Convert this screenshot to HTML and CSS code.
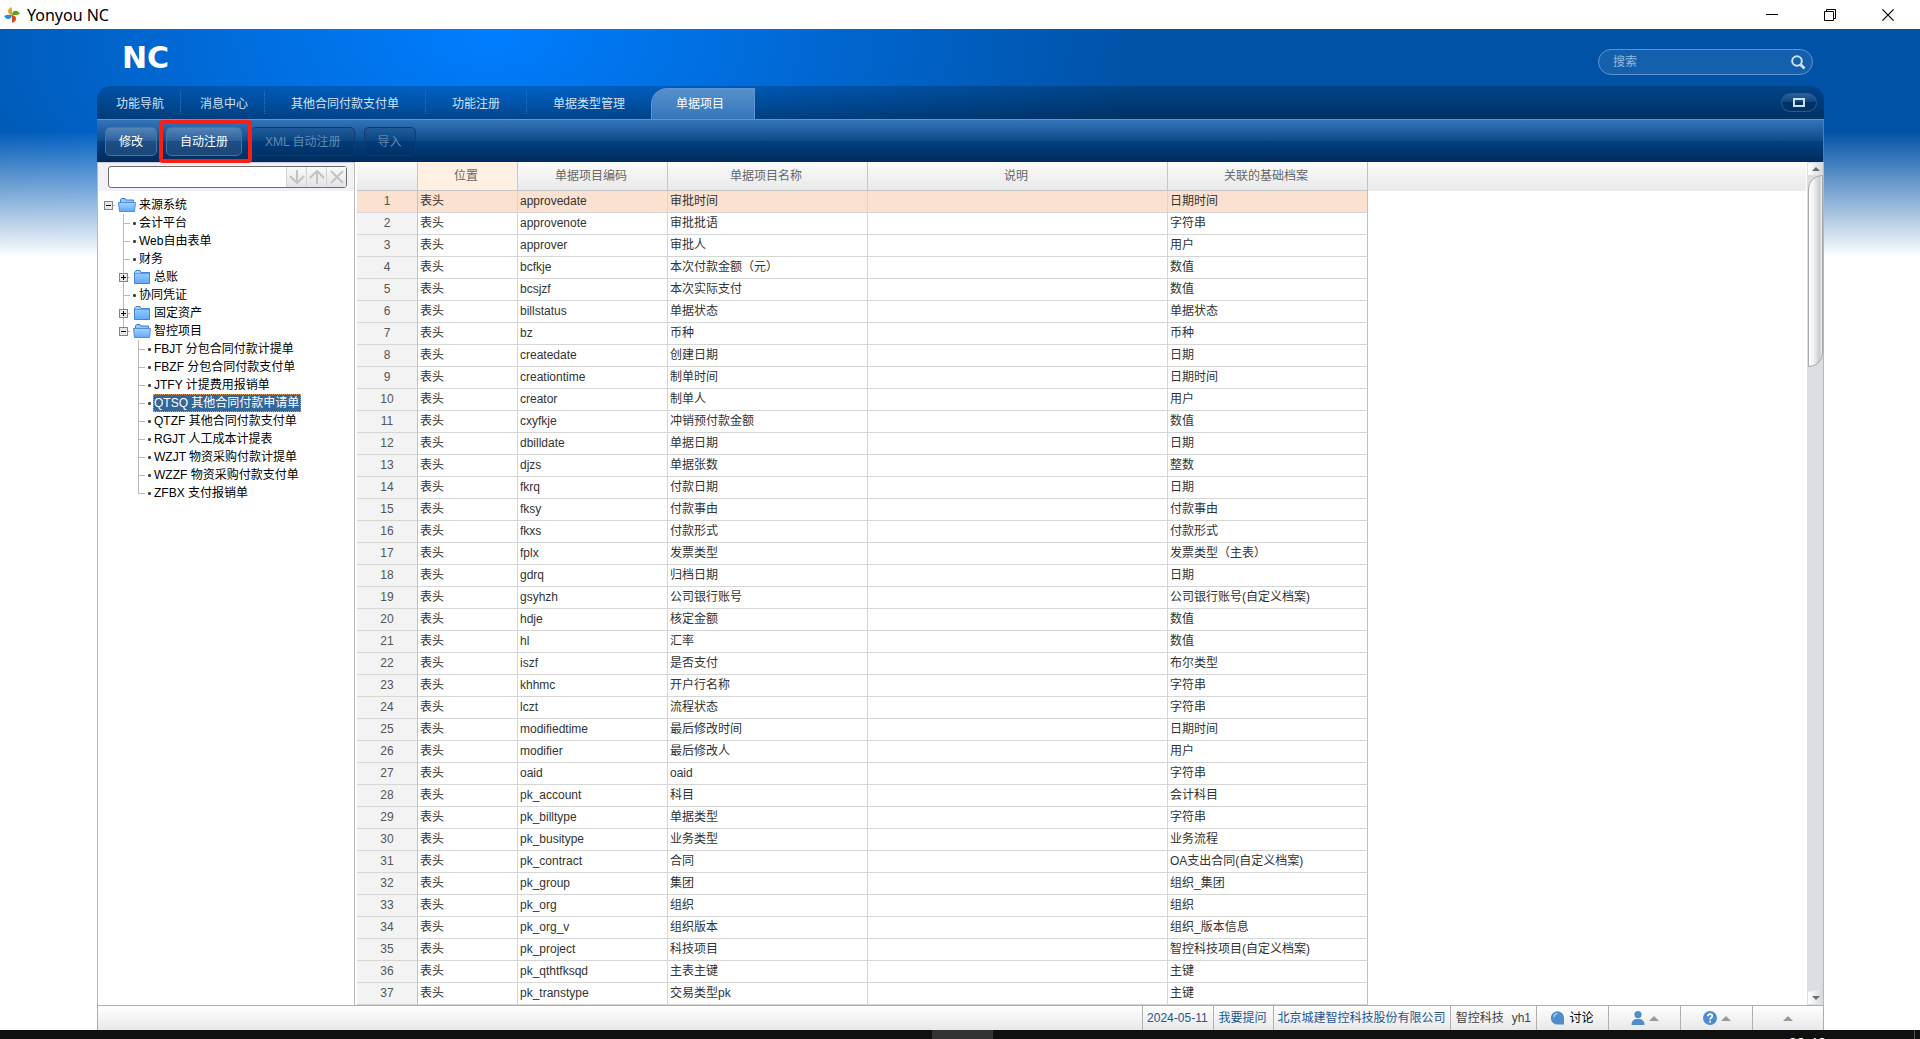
FILE: index.html
```html
<!DOCTYPE html>
<html lang="zh-CN">
<head>
<meta charset="utf-8">
<title>Yonyou NC</title>
<link rel="stylesheet" href="styles.css">
</head>
<body>
<header class="titlebar">
  <svg class="app-icon" width="16" height="16" viewBox="0 0 16 16" aria-hidden="true">
    <path d="M7.800 8C3 7 2.500 2 7.500 0C8 1.500 8.300 5 7.800 8Z" fill="#f0a020"/>
    <path d="M8 7.800C8 3 13.500 2 16 6.800C14 8 11 8.300 8 7.800Z" fill="#5fa51a"/>
    <path d="M8 8C13 8.500 13.500 14 8.500 16C7.800 14 7.600 11 8 8Z" fill="#d9481c"/>
    <path d="M7.800 8C7.500 13 2.500 13.500 0 9C2 7.800 5 7.400 7.800 8Z" fill="#1f8fe8"/>
  </svg>
  <h1 class="window-title">Yonyou NC</h1>
  <div class="window-controls">
    <button class="window-button" aria-label="最小化"><svg width="12" height="12" viewBox="0 0 12 12"><path d="M0 5.500H12" stroke="#000"/></svg></button>
    <button class="window-button" aria-label="还原"><svg width="12" height="12" viewBox="0 0 12 12"><path d="M.5 2.500H9.500V11.500H.5ZM2.500 2.500V.5H11.500V9.500H9.500" fill="none" stroke="#000"/></svg></button>
    <button class="window-button" aria-label="关闭"><svg width="12" height="12" viewBox="0 0 12 12"><path d="M.4 .4L11.600 11.600M11.600 .4L.4 11.600" stroke="#000" stroke-width="1.200"/></svg></button>
  </div>
</header>

<div class="desktop">
  <div class="app">
    <div class="banner">
      <div class="logo">NC</div>
      <form class="global-search">
        <input class="global-search-input" type="text" placeholder="搜索" aria-label="搜索">
        <button class="global-search-button" type="button" aria-label="搜索"><svg width="15" height="15" viewBox="0 0 15 15"><circle cx="6" cy="6" r="4.800" fill="none" stroke="#cfe0f2" stroke-width="2"/><path d="M9.500 9.500L13.500 13.500" stroke="#cfe0f2" stroke-width="2.800"/></svg></button>
      </form>
    </div>

    <nav class="tabs">
      <button class="tab tab-fixed">功能导航</button>
      <button class="tab tab-fixed">消息中心</button>
      <button class="tab">其他合同付款支付单</button>
      <button class="tab tab-wide">功能注册</button>
      <button class="tab tab-last">单据类型管理</button>
      <button class="tab tab-active">单据项目</button>
      <button class="maximize" aria-label="最大化"><span class="maximize-mark"></span></button>
    </nav>

    <div class="toolbar">
      <button class="tool">修改</button>
      <button class="tool tool-marked">自动注册</button>
      <button class="tool" disabled>XML 自动注册</button>
      <button class="tool" disabled>导入</button>
    </div>

    <main class="workspace">
      <aside class="sidebar">
        <div class="finder">
          <div class="finder-box">
            <input class="finder-input" type="text" aria-label="查找">
            <button class="finder-button" aria-label="下一个"><svg width="16" height="16" viewBox="0 0 16 16"><path d="M8 1V14M1 7L8 14L15 7" fill="none" stroke="#c2c2c2" stroke-width="2"/></svg></button>
            <button class="finder-button" aria-label="上一个"><svg width="16" height="16" viewBox="0 0 16 16"><path d="M8 15V2M1 9L8 2L15 9" fill="none" stroke="#c2c2c2" stroke-width="2"/></svg></button>
            <button class="finder-button" aria-label="清除"><svg width="16" height="16" viewBox="0 0 16 16"><path d="M2 2L14 14M14 2L2 14" fill="none" stroke="#c2c2c2" stroke-width="2"/></svg></button>
          </div>
        </div>
        <svg width="0" height="0" class="symbols" aria-hidden="true">
          <defs>
            <linearGradient id="blue" x1="0" y1="0" x2="0" y2="1"><stop offset="0" stop-color="#a9d2ff"/><stop offset="1" stop-color="#5fa9fb"/></linearGradient>
            <symbol id="open" viewBox="0 0 18 14"><path d="M2.500 12V1.500L3.500.5H7L8 2H15.500V12" fill="#8fc4ff" stroke="#3c80c8"/><path d="M.5 4.500H17.500L16.500 13.500H1.500Z" fill="url(#blue)" stroke="#4a90dc"/></symbol>
            <symbol id="closed" viewBox="0 0 18 14"><path d="M1.500 2.500L3 .5H7L8 2.500H16.500V13.500H1.500Z" fill="url(#blue)" stroke="#3c86d2"/><path d="M2 3.500H16" stroke="#5d9fe6"/></symbol>
          </defs>
        </svg>
        <ul class="tree">
          <li>
            <div class="node"><span class="join join-root"><button class="toggle" aria-label="收起"></button></span><svg class="folder"><use href="#open"/></svg><span class="label">来源系统</span></div>
            <ul class="branch">
              <li><div class="node"><span class="join"></span><i class="dot"></i><span class="label">会计平台</span></div></li>
              <li><div class="node"><span class="join"></span><i class="dot"></i><span class="label">Web自由表单</span></div></li>
              <li><div class="node"><span class="join"></span><i class="dot"></i><span class="label">财务</span></div></li>
              <li><div class="node"><span class="join"><button class="toggle toggle-plus" aria-label="展开"></button></span><svg class="folder"><use href="#closed"/></svg><span class="label">总账</span></div></li>
              <li><div class="node"><span class="join"></span><i class="dot"></i><span class="label">协同凭证</span></div></li>
              <li><div class="node"><span class="join"><button class="toggle toggle-plus" aria-label="展开"></button></span><svg class="folder"><use href="#closed"/></svg><span class="label">固定资产</span></div></li>
              <li>
                <div class="node"><span class="join join-end"><button class="toggle" aria-label="收起"></button></span><svg class="folder"><use href="#open"/></svg><span class="label">智控项目</span></div>
                <ul class="branch">
                  <li><div class="node"><span class="join"></span><i class="dot"></i><span class="label">FBJT 分包合同付款计提单</span></div></li>
                  <li><div class="node"><span class="join"></span><i class="dot"></i><span class="label">FBZF 分包合同付款支付单</span></div></li>
                  <li><div class="node"><span class="join"></span><i class="dot"></i><span class="label">JTFY 计提费用报销单</span></div></li>
                  <li><div class="node"><span class="join"></span><i class="dot"></i><span class="label label-selected">QTSQ 其他合同付款申请单</span></div></li>
                  <li><div class="node"><span class="join"></span><i class="dot"></i><span class="label">QTZF 其他合同付款支付单</span></div></li>
                  <li><div class="node"><span class="join"></span><i class="dot"></i><span class="label">RGJT 人工成本计提表</span></div></li>
                  <li><div class="node"><span class="join"></span><i class="dot"></i><span class="label">WZJT 物资采购付款计提单</span></div></li>
                  <li><div class="node"><span class="join"></span><i class="dot"></i><span class="label">WZZF 物资采购付款支付单</span></div></li>
                  <li><div class="node"><span class="join join-end"></span><i class="dot"></i><span class="label">ZFBX 支付报销单</span></div></li>
                </ul>
              </li>
            </ul>
          </li>
        </ul>
      </aside>

      <section class="grid-pane">
        <table class="grid">
          <colgroup><col class="col-index"><col class="col-place"><col class="col-code"><col class="col-name"><col class="col-note"><col class="col-doc"><col></colgroup>
          <thead>
            <tr><th></th><th class="sorted">位置</th><th>单据项目编码</th><th>单据项目名称</th><th>说明</th><th>关联的基础档案</th><th></th></tr>
          </thead>
          <tbody>
            <tr class="current"><th>1</th><td>表头</td><td>approvedate</td><td>审批时间</td><td></td><td>日期时间</td><td></td></tr>
            <tr><th>2</th><td>表头</td><td>approvenote</td><td>审批批语</td><td></td><td>字符串</td><td></td></tr>
            <tr><th>3</th><td>表头</td><td>approver</td><td>审批人</td><td></td><td>用户</td><td></td></tr>
            <tr><th>4</th><td>表头</td><td>bcfkje</td><td>本次付款金额（元）</td><td></td><td>数值</td><td></td></tr>
            <tr><th>5</th><td>表头</td><td>bcsjzf</td><td>本次实际支付</td><td></td><td>数值</td><td></td></tr>
            <tr><th>6</th><td>表头</td><td>billstatus</td><td>单据状态</td><td></td><td>单据状态</td><td></td></tr>
            <tr><th>7</th><td>表头</td><td>bz</td><td>币种</td><td></td><td>币种</td><td></td></tr>
            <tr><th>8</th><td>表头</td><td>createdate</td><td>创建日期</td><td></td><td>日期</td><td></td></tr>
            <tr><th>9</th><td>表头</td><td>creationtime</td><td>制单时间</td><td></td><td>日期时间</td><td></td></tr>
            <tr><th>10</th><td>表头</td><td>creator</td><td>制单人</td><td></td><td>用户</td><td></td></tr>
            <tr><th>11</th><td>表头</td><td>cxyfkje</td><td>冲销预付款金额</td><td></td><td>数值</td><td></td></tr>
            <tr><th>12</th><td>表头</td><td>dbilldate</td><td>单据日期</td><td></td><td>日期</td><td></td></tr>
            <tr><th>13</th><td>表头</td><td>djzs</td><td>单据张数</td><td></td><td>整数</td><td></td></tr>
            <tr><th>14</th><td>表头</td><td>fkrq</td><td>付款日期</td><td></td><td>日期</td><td></td></tr>
            <tr><th>15</th><td>表头</td><td>fksy</td><td>付款事由</td><td></td><td>付款事由</td><td></td></tr>
            <tr><th>16</th><td>表头</td><td>fkxs</td><td>付款形式</td><td></td><td>付款形式</td><td></td></tr>
            <tr><th>17</th><td>表头</td><td>fplx</td><td>发票类型</td><td></td><td>发票类型（主表）</td><td></td></tr>
            <tr><th>18</th><td>表头</td><td>gdrq</td><td>归档日期</td><td></td><td>日期</td><td></td></tr>
            <tr><th>19</th><td>表头</td><td>gsyhzh</td><td>公司银行账号</td><td></td><td>公司银行账号(自定义档案)</td><td></td></tr>
            <tr><th>20</th><td>表头</td><td>hdje</td><td>核定金额</td><td></td><td>数值</td><td></td></tr>
            <tr><th>21</th><td>表头</td><td>hl</td><td>汇率</td><td></td><td>数值</td><td></td></tr>
            <tr><th>22</th><td>表头</td><td>iszf</td><td>是否支付</td><td></td><td>布尔类型</td><td></td></tr>
            <tr><th>23</th><td>表头</td><td>khhmc</td><td>开户行名称</td><td></td><td>字符串</td><td></td></tr>
            <tr><th>24</th><td>表头</td><td>lczt</td><td>流程状态</td><td></td><td>字符串</td><td></td></tr>
            <tr><th>25</th><td>表头</td><td>modifiedtime</td><td>最后修改时间</td><td></td><td>日期时间</td><td></td></tr>
            <tr><th>26</th><td>表头</td><td>modifier</td><td>最后修改人</td><td></td><td>用户</td><td></td></tr>
            <tr><th>27</th><td>表头</td><td>oaid</td><td>oaid</td><td></td><td>字符串</td><td></td></tr>
            <tr><th>28</th><td>表头</td><td>pk_account</td><td>科目</td><td></td><td>会计科目</td><td></td></tr>
            <tr><th>29</th><td>表头</td><td>pk_billtype</td><td>单据类型</td><td></td><td>字符串</td><td></td></tr>
            <tr><th>30</th><td>表头</td><td>pk_busitype</td><td>业务类型</td><td></td><td>业务流程</td><td></td></tr>
            <tr><th>31</th><td>表头</td><td>pk_contract</td><td>合同</td><td></td><td>OA支出合同(自定义档案)</td><td></td></tr>
            <tr><th>32</th><td>表头</td><td>pk_group</td><td>集团</td><td></td><td>组织_集团</td><td></td></tr>
            <tr><th>33</th><td>表头</td><td>pk_org</td><td>组织</td><td></td><td>组织</td><td></td></tr>
            <tr><th>34</th><td>表头</td><td>pk_org_v</td><td>组织版本</td><td></td><td>组织_版本信息</td><td></td></tr>
            <tr><th>35</th><td>表头</td><td>pk_project</td><td>科技项目</td><td></td><td>智控科技项目(自定义档案)</td><td></td></tr>
            <tr><th>36</th><td>表头</td><td>pk_qthtfksqd</td><td>主表主键</td><td></td><td>主键</td><td></td></tr>
            <tr><th>37</th><td>表头</td><td>pk_transtype</td><td>交易类型pk</td><td></td><td>主键</td><td></td></tr>
          </tbody>
        </table>
        <div class="scrollbar" aria-hidden="true">
          <div class="scroll-arrow"><i class="arrow arrow-up"></i></div>
          <div class="scroll-thumb"></div>
          <div class="scroll-track"></div>
          <div class="scroll-arrow scroll-arrow-down"><i class="arrow arrow-down"></i></div>
        </div>
      </section>
    </main>

    <footer class="status">
      <a class="status-item status-link" href="#">2024-05-11</a>
      <a class="status-item status-link" href="#">我要提问</a>
      <a class="status-item status-link" href="#">北京城建智控科技股份有限公司</a>
      <span class="status-item status-user"><span>智控科技</span><span>yh1</span></span>
      <button class="status-item status-button status-talk"><svg width="14" height="14" viewBox="0 0 14 14"><path d="M6.500 .3A6.400 6.400 0 0 0 6.500 13.600H13V7A6.500 6.500 0 0 0 6.500 .3Z" fill="#4e8dcb"/><path d="M3 6.500A4 4 0 0 1 6.500 2.600" fill="none" stroke="#b8d6f2" stroke-width="1.200"/></svg><span>讨论</span></button>
      <button class="status-item status-button" aria-label="用户"><svg width="14" height="14" viewBox="0 0 14 14"><circle cx="7" cy="3.600" r="3.600" fill="#4e8dcb"/><path d="M.5 14C.5 9 3.500 8 7 8S13.500 9 13.500 14Z" fill="#4e8dcb"/></svg><i class="caret"></i></button>
      <button class="status-item status-button" aria-label="帮助"><svg width="14" height="14" viewBox="0 0 14 14"><circle cx="7" cy="7" r="7" fill="#4e8dcb"/><path d="M4.800 5.300C4.800 2.300 9.300 2.500 9.300 5.200C9.300 6.800 7.100 6.800 7.100 8.600M7.100 9.800V11.600" fill="none" stroke="#fff" stroke-width="1.700"/></svg><i class="caret"></i></button>
      <button class="status-item status-button status-more" aria-label="更多"><i class="caret"></i></button>
    </footer>
  </div>
</div>

<div class="taskbar">
  <div class="taskbar-window"></div>
  <time class="clock">20:42</time>
  <div class="show-desktop"></div>
</div>
</body>
</html>
```
FILE: styles.css
```css
* { box-sizing: border-box; }

body {
  margin: 0;
  min-height: 100vh;
  display: flex;
  flex-direction: column;
  background: #fff;
  color: #333;
  font: 12px/18px "Liberation Sans", "Noto Sans CJK SC", sans-serif;
}

button, input {
  margin: 0;
  padding: 0;
  border: 0;
  background: none;
  color: inherit;
  font: inherit;
}

ul { margin: 0; padding: 0; list-style: none; }
svg { display: block; flex: none; }

/* window title */
.titlebar {
  display: flex;
  align-items: center;
  height: 29px;
  padding-left: 4px;
}
.window-title {
  margin: 0 0 0 7px;
  color: #000;
  font: 16px/24px "Noto Sans", sans-serif;
}
.window-controls { display: flex; margin-left: auto; padding-right: 3px; }
.window-button {
  display: flex;
  justify-content: center;
  align-items: center;
  width: 58px;
  height: 29px;
}

/* blue backdrop that fades out to white */
.desktop {
  flex: 1;
  display: flex;
  background:
    linear-gradient(rgba(255, 255, 255, 0) 102px, #fff 228px),
    radial-gradient(650px 320px at 490px 10px, #007eff, #005dbd 75%, #0052a6);
}
.app {
  flex: 1;
  min-width: 0;
  display: flex;
  flex-direction: column;
  margin: 0 96px 0 97px;
}

.banner {
  display: flex;
  justify-content: space-between;
  height: 57px;
  padding: 0 11px 0 25px;
}
.logo {
  color: #fff;
  font: bold 30px/57px "DejaVu Sans", sans-serif;
}
.global-search {
  display: flex;
  align-items: center;
  width: 215px;
  height: 26px;
  margin-top: 20px;
  padding: 0 6px 0 14px;
  border: 1px solid #5f93cc;
  border-radius: 13px;
  background: #1560ad;
}
.global-search-input { flex: 1; min-width: 0; outline: 0; color: #fff; }
.global-search-input::placeholder { color: #93b9e2; opacity: 1; }

/* page tabs */
.tabs {
  display: flex;
  align-items: center;
  height: 33px;
  border-radius: 14px 14px 0 0;
  background: linear-gradient(rgba(0, 0, 0, .18), rgba(0, 0, 0, .28) 50%, rgba(0, 0, 0, .4));
}
.tab {
  height: 23px;
  padding: 2px 26px 0;
  border-right: 1px dotted #3f74ab;
  color: #d2e2f3;
}
.tab-fixed { padding: 2px 16px 0 19px; }
.tab-last { border-right: 0; }
.tab-active {
  align-self: flex-end;
  height: 31px;
  padding: 0 30px 0 24px;
  border: 1px solid #5b96d2;
  border-bottom: 0;
  border-radius: 16px 0 0 0;
  background: linear-gradient(#5590cd, #3576ba);
  color: #fff;
}
.maximize {
  display: flex;
  justify-content: center;
  align-items: center;
  width: 36px;
  height: 19px;
  margin: 0 7px 0 auto;
  border: 1px solid #2a5c94;
  border-radius: 10px;
  background: linear-gradient(#2a609e, #0c4280 50%, #003266 50%);
}
.maximize-mark { width: 12px; height: 9px; border: 2px solid #cfe0f2; }

/* action buttons */
.toolbar {
  display: flex;
  align-items: center;
  gap: 9px;
  height: 43px;
  padding: 1px 8px 0;
  border-top: 1px solid #5c97d2;
  border-right: 1px solid #4a80ba;
  background: linear-gradient(#3375ba, #0e4a89 50%, #004080 50%, #002c5f);
}
.tool {
  height: 29px;
  padding: 0 13px;
  border: 1px solid #49749f;
  border-radius: 5px;
  background: linear-gradient(#5484b7, #2b5f9b 50%, #1d4f86 50%, #1b4678);
  color: #fff;
}
.tool:disabled {
  border-color: #0d3b70;
  background: rgba(0, 40, 90, .15);
  color: #6489b1;
}
.tool-marked { position: relative; }
.tool-marked::after {
  content: "";
  position: absolute;
  inset: -8px -11px -8px -8px;
  border: 4px solid #ff1c12;
  border-radius: 4px;
}

.workspace {
  flex: 1;
  display: flex;
  border: solid #b9b9bd;
  border-width: 0 1px;
  background: #fff;
}

/* navigation tree */
.sidebar {
  width: 257px;
  border-right: 1px solid #bcbcbc;
}
.finder {
  height: 29px;
  padding: 3px 7px 0 10px;
  border-top: 1px solid #c9ccd6;
  background: #f1f1f7;
}
.finder-box {
  display: flex;
  height: 22px;
  border: 1px solid #6c6c6c;
  border-radius: 3px;
  background: #fff;
}
.finder-input { flex: 1; min-width: 0; padding: 0 3px; outline: 0; }
.finder-button {
  display: flex;
  justify-content: center;
  align-items: center;
  width: 20px;
  border-left: 1px solid #d4d4d4;
  background: linear-gradient(#fafafa, #e3e3e5);
}
.symbols { position: absolute; }
.tree { padding: 5px 0 0 6px; color: #000; }
.branch { padding-left: 15px; }
.node { display: flex; align-items: center; height: 18px; white-space: nowrap; }
.join {
  display: flex;
  align-items: center;
  width: 11px;
  height: 18px;
  margin-right: 3px;
  background:
    linear-gradient(#b9b9b9, #b9b9b9) 4px 0 / 1px 100% no-repeat,
    linear-gradient(#b9b9b9, #b9b9b9) 4px 9px / 7px 1px no-repeat;
}
.join-end { background-size: 1px 9px, 7px 1px; }
.join-root { background-size: 0 0, 7px 1px; }
.toggle {
  width: 9px;
  height: 9px;
  border: 1px solid #858585;
  background: linear-gradient(#000, #000) center / 5px 1px no-repeat #e9e9e9;
}
.toggle-plus {
  background:
    linear-gradient(#000, #000) center / 5px 1px no-repeat,
    linear-gradient(#000, #000) center / 1px 5px no-repeat #e9e9e9;
}
.folder { width: 18px; height: 14px; margin-right: 2px; }
.dot { width: 3px; height: 3px; margin-right: 2px; border-radius: 1px; background: #444; }
.label { padding: 0 1px; }
.label-selected {
  padding: 0 2px 0 1px;
  outline: 1px dotted #d69a5c;
  outline-offset: -1px;
  background: #336699;
  color: #fff;
}

/* data grid */
.grid-pane {
  flex: 1;
  min-width: 0;
  display: flex;
  padding-left: 2px;
}
.grid {
  flex: 1;
  width: 0;
  table-layout: fixed;
  border-spacing: 0;
  align-self: flex-start;
}
.col-index { width: 61px; }
.col-place { width: 100px; }
.col-code { width: 150px; }
.col-name, .col-doc { width: 200px; }
.col-note { width: 300px; }
.grid th, .grid td {
  height: 22px;
  padding: 0 2px 2px;
  border: solid #d6d6d6;
  border-width: 0 1px 1px 0;
  text-align: left;
  line-height: 18px;
  font-weight: normal;
  white-space: nowrap;
}
.grid thead th {
  height: 29px;
  padding: 0 3px 0 0;
  border-color: #c6c6c6;
  background: linear-gradient(#fbfbfb, #e9e9e9);
  color: #666;
  text-align: center;
}
.grid thead .sorted { background: #fff0e2; }
.grid tbody th { border-right-color: #c2c2c2; background: #f3f3f3; color: #555; text-align: center; }
.grid td:nth-child(6), .grid thead th:nth-child(6) { border-right-color: #c0c0c0; }
.grid tr > :last-child { border: 0; }
.grid .current th, .grid .current td { background: #fae1d0; }
.grid .current td:last-child { background: none; }

.scrollbar {
  display: flex;
  flex-direction: column;
  width: 16px;
  margin-left: 1px;
  padding: 1px 0 1px 1px;
  background: #dbdfe4;
}
.scroll-arrow {
  display: flex;
  justify-content: center;
  height: 12px;
  padding-top: 4px;
  background: linear-gradient(90deg, #fff, #d5d7da);
}
.scroll-arrow-down {
  height: 20px;
  padding-top: 12px;
  clip-path: polygon(0 40%, 60% 30%, 100% 0, 100% 100%, 0 100%);
}
.scroll-thumb {
  height: 192px;
  border: 1px solid #a6a8ab;
  border-radius: 14px 0 14px 0;
  background: linear-gradient(90deg, #fff, #efefef 40%, #c9cbce 80%, #eee);
}
.scroll-track { flex: 1; }
.arrow { width: 0; height: 0; border: solid transparent; border-width: 0 4px; }
.arrow-up { border-bottom: 4px solid #6b6b6b; }
.arrow-down { border-top: 4px solid #6b6b6b; }

/* status bar */
.status {
  display: flex;
  justify-content: flex-end;
  height: 25px;
  border: 1px solid #aeaeae;
  border-bottom: 0;
  background: linear-gradient(#fff, #e8e8ea);
}
.status-item {
  display: flex;
  align-items: center;
  justify-content: center;
  padding: 0 4px;
  border-left: 1px solid #b0b0b0;
}
.status-link { color: #24568f; text-decoration: none; }
.status-link:nth-child(1) { padding: 0 5px 0 4px; }
.status-link:nth-child(2) { padding: 0 6px 0 5px; }
.status-user { gap: 8px; padding: 0 5px; color: #444; }
.status-button { width: 72px; gap: 4px; color: #000; }
.status-more { width: 71px; }
.caret {
  border: solid transparent;
  border-width: 0 5px 5px;
  border-bottom-color: #999;
}

/* strip of the system taskbar */
.taskbar {
  display: flex;
  height: 9px;
  overflow: hidden;
  background: #101010;
}
.taskbar-window { width: 61px; margin-left: 932px; background: #333; }
.clock { margin: 4px 88px 0 auto; color: #fff; font: 15px/18px "Liberation Sans", sans-serif; }
.show-desktop { width: 6px; border-left: 1px solid #555; }
```
